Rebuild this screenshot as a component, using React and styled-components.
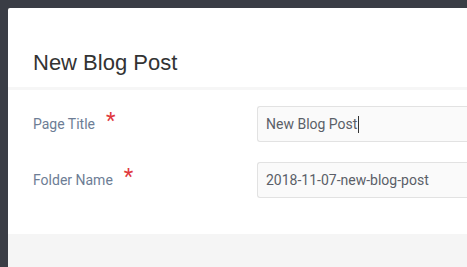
import React from 'react'
import styled, { createGlobalStyle } from 'styled-components'

const GlobalStyle = createGlobalStyle`
  html, body {
    margin: 0;
    padding: 0;
    background: #3a3d45;
    overflow: hidden;
  }
`

const Backdrop = styled.div`
  width: 467px;
  height: 267px;
  padding: 8px 0 0 8px;
  box-sizing: border-box;
  background: #3a3d45;
  display: flex;
`

const Modal = styled.div`
  flex: 1;
  background: #fff;
  border-top-left-radius: 2px;
  display: flex;
  flex-direction: column;
  overflow: hidden;
`

const Header = styled.div`
  height: 82px;
  box-sizing: border-box;
  padding: 42px 25px 0;
  border-bottom: 3px solid #f6f6f6;
`

const Title = styled.h3`
  margin: 0;
  font-family: "Liberation Sans", Arial, sans-serif;
  font-weight: 400;
  font-size: 22px;
  line-height: 26px;
  color: #333;
`

const Body = styled.div`
  padding: 16px 0 36px 25px;
  display: flex;
  flex-direction: column;
  gap: 20px;
`

const Row = styled.div`
  display: grid;
  grid-template-columns: 224px 1fr;
  align-items: center;
`

const Label = styled.label`
  font-family: Roboto, sans-serif;
  font-size: 14px;
  color: #6d7d95;
  display: flex;
  align-items: center;
`

const Required = styled.span`
  color: #e0393e;
  font-size: 22px;
  line-height: 14px;
  margin-left: ${p => p.gap}px;
  position: relative;
  top: -3px;
`

const Input = styled.div`
  height: 36px;
  box-sizing: border-box;
  border: 1px solid #e2e2e2;
  border-right: none;
  border-radius: 3px 0 0 3px;
  background: #fafafa;
  padding: 0 8px;
  display: flex;
  align-items: center;
  font-family: Roboto, sans-serif;
  font-size: 14px;
  color: #5a5f68;
  white-space: nowrap;
`

const Caret = styled.span`
  display: inline-block;
  width: 1px;
  height: 17px;
  background: #333;
  margin-left: 1px;
`

const Footer = styled.div`
  flex: 1;
  background: #f5f5f5;
`

export default function App () {
  return (
    <Backdrop>
      <GlobalStyle />
      <Modal>
        <Header>
          <Title>New Blog Post</Title>
        </Header>
        <Body>
          <Row>
            <Label>Page Title<Required gap={11}>*</Required></Label>
            <Input>New Blog Post<Caret /></Input>
          </Row>
          <Row>
            <Label>Folder Name<Required gap={11}>*</Required></Label>
            <Input>2018-11-07-new-blog-post</Input>
          </Row>
        </Body>
        <Footer />
      </Modal>
    </Backdrop>
  )
}
